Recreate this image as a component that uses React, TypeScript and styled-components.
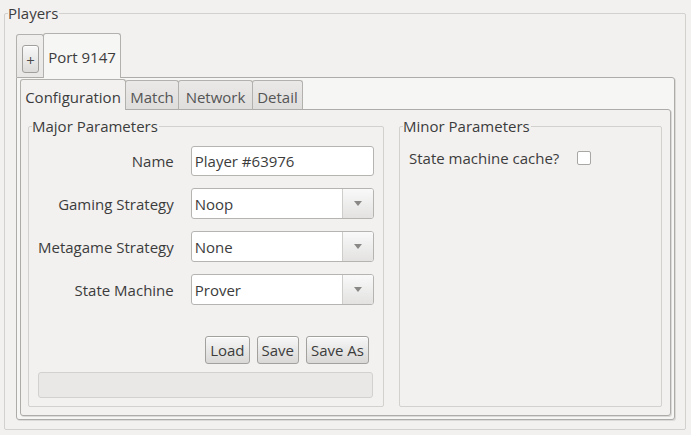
import React from "react";
import styled, { createGlobalStyle } from "styled-components";

const Global = createGlobalStyle`
  html, body { margin: 0; padding: 0; background: #f2f1f0; }
  body {
    font-family: "Open Sans", "Noto Sans", "DejaVu Sans", sans-serif;
    font-size: 15px;
    color: #3c3c3c;
  }
  * { box-sizing: border-box; }
`;

const Page = styled.div`
  width: 691px;
  height: 435px;
  padding: 13px 5px 5px 4px;
`;

const TitledBox = styled.div`
  position: relative;
  border: 1px solid #d3d1ce;
  border-radius: 2px;
`;

const BoxTitle = styled.span`
  position: absolute;
  top: -11px;
  left: 3px;
  line-height: 20px;
  padding-right: 1px;
  background: #f2f1f0;
  white-space: nowrap;
`;

const PlayersBox = styled(TitledBox)`
  width: 682px;
  height: 417px;
  padding: 19px 10px 9px 11px;
  display: flex;
  flex-direction: column;
`;

const TabBar = styled.div<{ $h: number }>`
  height: ${(p) => p.$h}px;
  display: flex;
  align-items: flex-end;
  flex: none;
`;

const PlusTab = styled.div`
  width: 28px;
  height: 43px;
  border: 1px solid #b3b1ae;
  border-bottom: none;
  border-radius: 3px 3px 0 0;
  background: linear-gradient(#f0efee, #e8e7e6);
  display: flex;
  align-items: flex-end;
  justify-content: center;
  padding-bottom: 4px;
  padding-left: 1px;
`;

const PlusButton = styled.div`
  width: 17px;
  height: 28px;
  border: 1px solid #a19f9c;
  border-radius: 3px;
  background: linear-gradient(#f8f8f8, #dcdbda);
  box-shadow: inset 0 1px 0 #ffffff;
  display: flex;
  align-items: center;
  justify-content: center;
  padding-top: 2px;
  font-size: 15px;
  line-height: 1;
  color: #4a4a4a;
`;

const PortTab = styled.div`
  position: relative;
  z-index: 1;
  height: 45px;
  width: 78px;
  margin-left: -1px;
  margin-bottom: -1px;
  border: 1px solid #b3b1ae;
  border-bottom: none;
  border-radius: 3px 3px 0 0;
  background: #f6f6f5;
  display: flex;
  align-items: center;
  justify-content: center;
  padding-top: 2px;
  white-space: nowrap;
`;

const OuterPanel = styled.div`
  flex: 1;
  border: 1px solid #aeaca9;
  border-radius: 0 3px 3px 3px;
  background: #f6f6f5;
  padding: 1px 3px 3px 3px;
  display: flex;
  flex-direction: column;
  box-shadow: 1px 1px 0 #dcdad8;
`;

const InnerTab = styled.div<{ $active?: boolean; $w: number }>`
  position: relative;
  z-index: ${(p) => (p.$active ? 1 : 0)};
  width: ${(p) => p.$w}px;
  height: ${(p) => (p.$active ? 31 : 29)}px;
  margin-bottom: ${(p) => (p.$active ? -1 : 0)}px;
  margin-left: -1px;
  &:first-child { margin-left: 0; }
  padding-top: ${(p) => (p.$active ? 4 : 3)}px;
  border: 1px solid #b3b1ae;
  border-bottom: none;
  border-radius: 3px 3px 0 0;
  background: ${(p) =>
    p.$active ? "#f2f1f0" : "linear-gradient(#eae9e8, #dfdedd)"};
  color: ${(p) => (p.$active ? "#3c3c3c" : "#555555")};
  display: flex;
  align-items: center;
  justify-content: center;
  white-space: nowrap;
`;

const InnerPanel = styled.div`
  flex: 1;
  border: 1px solid #aeaca9;
  border-radius: 0 3px 3px 3px;
  background: #f2f1f0;
  padding: 16px 8px 8px 7px;
  display: grid;
  grid-template-columns: 356px 1fr;
  column-gap: 15px;
  box-shadow: 1px 1px 0 #dcdad8;
`;

const Group = styled(TitledBox)`
  display: flex;
  flex-direction: column;
`;

const MajorBody = styled.div`
  padding: 19px 10px 8px 9px;
  display: flex;
  flex-direction: column;
  flex: 1;
`;

const Form = styled.div`
  display: grid;
  grid-template-columns: 1fr 183px;
  column-gap: 17px;
  row-gap: 12px;
  align-items: center;
`;

const Label = styled.div`
  text-align: right;
  white-space: nowrap;
`;

const TextField = styled.div`
  height: 30px;
  border: 1px solid #b6b4b1;
  border-radius: 3px;
  background: #ffffff;
  padding: 0 3px;
  display: flex;
  align-items: center;
  white-space: nowrap;
`;

const Combo = styled.div`
  height: 31px;
  border: 1px solid #b6b4b1;
  border-radius: 3px;
  background: #ffffff;
  display: flex;
  overflow: hidden;
`;

const ComboValue = styled.div`
  flex: 1;
  padding: 0 3px;
  display: flex;
  align-items: center;
  white-space: nowrap;
`;

const ComboArrow = styled.div`
  width: 31px;
  border-left: 1px solid #cfcdca;
  background: linear-gradient(#f9f9f9, #e3e2e1);
  display: flex;
  align-items: center;
  justify-content: center;
`;

const ButtonRow = styled.div`
  margin-top: 31px;
  padding-right: 4px;
  display: flex;
  justify-content: flex-end;
  gap: 7px;
`;

const Button = styled.div`
  height: 28px;
  padding: 0 4px;
  border: 1px solid #a3a19e;
  border-radius: 3px;
  background: linear-gradient(#f7f7f7, #d9d8d7);
  box-shadow: inset 0 1px 0 #ffffff;
  display: flex;
  align-items: center;
  white-space: nowrap;
`;

const Progress = styled.div`
  margin-top: 8px;
  height: 26px;
  border: 1px solid #d3d1cf;
  border-radius: 3px;
  background: #e9e8e7;
`;

const MinorBody = styled.div`
  padding: 24px 9px 0 9px;
  display: flex;
  align-items: center;
  gap: 18px;
  height: 14px;
  box-sizing: content-box;
`;

const CheckBox = styled.div`
  width: 14px;
  height: 14px;
  border: 1px solid #a9a7a4;
  border-radius: 2px;
  background: #ffffff;
  flex: none;
`;

const Arrow = () => (
  <svg width="8" height="5" viewBox="0 0 8 5">
    <polygon points="0,0 8,0 4,5" fill="#8a8886" />
  </svg>
);

const ComboBox = ({ value }: { value: string }) => (
  <Combo>
    <ComboValue>{value}</ComboValue>
    <ComboArrow>
      <Arrow />
    </ComboArrow>
  </Combo>
);

export default function App() {
  return (
    <>
      <Global />
      <Page>
        <PlayersBox>
          <BoxTitle>Players</BoxTitle>
          <TabBar $h={44}>
            <PlusTab>
              <PlusButton>+</PlusButton>
            </PlusTab>
            <PortTab>Port 9147</PortTab>
          </TabBar>
          <OuterPanel>
            <TabBar $h={30}>
              <InnerTab $active $w={106}>Configuration</InnerTab>
              <InnerTab $w={54}>Match</InnerTab>
              <InnerTab $w={75}>Network</InnerTab>
              <InnerTab $w={51}>Detail</InnerTab>
            </TabBar>
            <InnerPanel>
              <Group>
                <BoxTitle>Major Parameters</BoxTitle>
                <MajorBody>
                  <Form>
                    <Label>Name</Label>
                    <TextField>Player #63976</TextField>
                    <Label>Gaming Strategy</Label>
                    <ComboBox value="Noop" />
                    <Label>Metagame Strategy</Label>
                    <ComboBox value="None" />
                    <Label>State Machine</Label>
                    <ComboBox value="Prover" />
                  </Form>
                  <ButtonRow>
                    <Button>Load</Button>
                    <Button>Save</Button>
                    <Button>Save As</Button>
                  </ButtonRow>
                  <Progress />
                </MajorBody>
              </Group>
              <Group>
                <BoxTitle>Minor Parameters</BoxTitle>
                <MinorBody>
                  <span>State machine cache?</span>
                  <CheckBox />
                </MinorBody>
              </Group>
            </InnerPanel>
          </OuterPanel>
        </PlayersBox>
      </Page>
    </>
  );
}
